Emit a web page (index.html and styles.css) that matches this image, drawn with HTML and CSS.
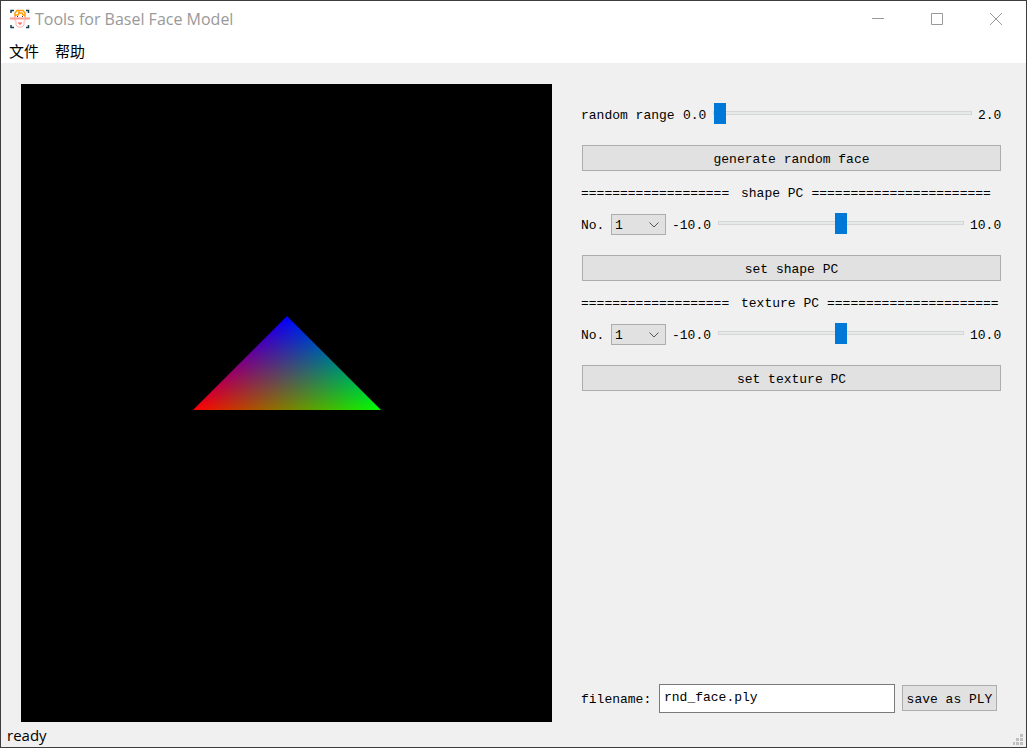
FILE: index.html
```html
<!DOCTYPE html>
<html lang="zh-CN">
<head>
<meta charset="utf-8">
<title>Tools for Basel Face Model</title>
<link rel="stylesheet" href="styles.css">
</head>
<body>
<div class="window">
  <header class="titlebar">
    <svg class="app-icon" width="20" height="20" viewBox="0 0 20 20" fill="none" aria-hidden="true">
      <path d="M1 4V1.500H4M16 1.500H18.500V4M1 16V18.500H4M16 18.500H18.500V16" stroke="#123f52" stroke-width="1.500"/>
      <path d="M5 8V4L7 1.500H13L15 4V8M5 6H8L9 4H12L13 6H15M9 2V4" stroke="#ff9d0a" stroke-width="1.500"/>
      <path d="M4.500 7V11L6 12V16L8 18H12L14 16V12L15.500 11V7" stroke="#ffb3ae"/>
      <path d="M0 9.500H20" stroke="#ff9c98" stroke-width="2"/>
      <path d="M7 7.500H8M12 7.500H13" stroke="#123f52"/>
      <path d="M8 14H12M9 15H11" stroke="#ff4545"/>
    </svg>
    <h1 class="title">Tools for Basel Face Model</h1>
    <div class="window-buttons">
      <button class="window-button" type="button" aria-label="Minimize"><svg width="12" height="12" viewBox="0 0 12 12"><path d="M0 5.500H12"/></svg></button>
      <button class="window-button" type="button" aria-label="Maximize"><svg width="12" height="12" viewBox="0 0 12 12"><path d="M.5.500H11.500V11.500H.5Z"/></svg></button>
      <button class="window-button" type="button" aria-label="Close"><svg width="12" height="12" viewBox="0 0 12 12"><path d="M0 0L12 12M12 0L0 12"/></svg></button>
    </div>
  </header>
  <nav class="menubar">
    <button class="menu" type="button">文件</button>
    <button class="menu" type="button">帮助</button>
  </nav>
  <main class="content">
    <div class="viewport">
      <svg class="scene" viewBox="0 0 188 94" role="img" aria-label="Shaded triangle">
        <defs>
          <linearGradient id="red" gradientUnits="userSpaceOnUse" x1="0" y1="94" x2="94" y2="0"><stop stop-color="#f00"/><stop offset="1" stop-color="#000"/></linearGradient>
          <linearGradient id="green" gradientUnits="userSpaceOnUse" x1="188" y1="94" x2="94" y2="0"><stop stop-color="#0f0"/><stop offset="1" stop-color="#000"/></linearGradient>
          <linearGradient id="blue" gradientUnits="userSpaceOnUse" x1="94" y1="0" x2="94" y2="94"><stop stop-color="#00f"/><stop offset="1" stop-color="#000"/></linearGradient>
        </defs>
        <path class="light" fill="url(#red)" d="M0 94H188L94 0Z"/>
        <path class="light" fill="url(#green)" d="M0 94H188L94 0Z"/>
        <path class="light" fill="url(#blue)" d="M0 94H188L94 0Z"/>
      </svg>
    </div>
    <form class="panel">
      <div class="row">
        <label class="range-label" for="range">random range</label>
        <span class="short-value">0.0</span>
        <input class="slider" id="range" type="range" min="0" max="2" step="0.1" value="0">
        <span class="short-value">2.0</span>
      </div>
      <button class="button" type="button">generate random face</button>
      <div class="separator"><span>===================</span><span>shape PC</span><span>=======================</span></div>
      <div class="row">
        <label class="number-label" for="shape-no">No.</label>
        <select class="select" id="shape-no"><option>1</option></select>
        <span class="low-value">-10.0</span>
        <input class="slider" type="range" min="-10" max="10" value="0" aria-label="Shape value">
        <span class="high-value">10.0</span>
      </div>
      <button class="button" type="button">set shape PC</button>
      <div class="separator"><span>===================</span><span>texture PC</span><span>======================</span></div>
      <div class="row">
        <label class="number-label" for="texture-no">No.</label>
        <select class="select" id="texture-no"><option>1</option></select>
        <span class="low-value">-10.0</span>
        <input class="slider" type="range" min="-10" max="10" value="0" aria-label="Texture value">
        <span class="high-value">10.0</span>
      </div>
      <button class="button" type="button">set texture PC</button>
      <div class="file-row">
        <label class="file-label" for="filename">filename:</label>
        <input class="textbox" id="filename" type="text" value="rnd_face.ply">
        <button class="button save" type="button">save as PLY</button>
      </div>
    </form>
  </main>
  <footer class="statusbar">
    <span>ready</span>
    <svg class="grip" width="10" height="11" viewBox="0 0 10 11" fill="#bfbfbf" aria-hidden="true"><path d="M7 0h3v3H7zM3 4h3v3H3zM7 4h3v3H7zM0 8h2v3H0zM3 8h3v3H3zM7 8h3v3H7z"/></svg>
  </footer>
</div>
</body>
</html>
```
FILE: styles.css
```css
* { box-sizing: border-box; }
body {
  margin: 0;
  background: #f0f0f0;
  color: #000;
  font-family: "Open Sans", "Noto Sans CJK SC", sans-serif;
  font-size: 15px;
}
button, input, select { margin: 0; font: inherit; color: inherit; }

.window {
  display: flex;
  flex-direction: column;
  min-height: 100vh;
  border: 1px solid #3e3c3e;
}
.titlebar {
  display: flex;
  align-items: center;
  height: 36px;
  padding: 0 1px 0 9px;
  background: #fff;
}
.title {
  flex: 1;
  margin: 0 0 0 5px;
  color: #999;
  font-size: 16px;
  font-weight: 400;
}
.window-buttons { display: flex; }
.window-button {
  display: grid;
  place-items: center;
  width: 59px;
  height: 36px;
  padding: 0;
  border: 0;
  background: none;
}
.window-button path { fill: none; stroke: #999; }
.menubar {
  display: flex;
  gap: 16px;
  height: 26px;
  padding-left: 8px;
  background: #fff;
}
.menu {
  padding: 0;
  border: 0;
  background: none;
  line-height: 28px;
}

.content {
  flex: 1;
  display: grid;
  grid-template-columns: minmax(0, 531fr) minmax(0, 421fr);
  gap: 29px;
  padding: 21px 24px 0 20px;
}
.viewport {
  display: grid;
  place-items: center;
  padding-bottom: 80px;
  background: #000;
}
.scene { width: 188px; isolation: isolate; }
.light { mix-blend-mode: screen; }

.panel {
  display: flex;
  flex-direction: column;
  padding: 19px 0 9px;
  font-family: "Liberation Mono", monospace;
  font-size: 13px;
}
.row {
  display: flex;
  align-items: center;
  height: 21px;
  margin-bottom: 21px;
  line-height: 21px;
  white-space: nowrap;
}
.row span, .row label { padding-top: 4px; }
.range-label { width: 102px; }
.number-label { width: 30px; }
.short-value { width: 24px; }
.low-value { width: 40px; margin-left: 6px; }
.high-value { width: 32px; }
.select {
  appearance: none;
  width: 55px;
  height: 21px;
  margin-top: 2px;
  padding: 0 3px;
  border: 1px solid #adadad;
  border-radius: 0;
  background: #e1e1e1 url("data:image/svg+xml,%3Csvg xmlns='http://www.w3.org/2000/svg' width='10' height='6' fill='none' stroke='%23555'%3E%3Cpath d='M.5.5L5 5L9.500.5'/%3E%3C/svg%3E") no-repeat right 6px center;
}
.slider {
  appearance: none;
  flex: 1;
  align-self: flex-start;
  min-width: 0;
  height: 20px;
  margin: 0 6px;
  background: none;
}
.slider::-webkit-slider-runnable-track {
  height: 4px;
  border: 1px solid #d6d6d6;
  background: #e7eaea;
}
.slider::-webkit-slider-thumb {
  appearance: none;
  width: 12px;
  height: 21px;
  margin-top: -9px;
  background: #0078d7;
}
.button {
  height: 26px;
  margin: 0 1px;
  padding: 2px 0 0;
  border: 1px solid #adadad;
  background: #e1e1e1;
}
.separator {
  display: grid;
  grid-template-columns: 152px auto minmax(0, 1fr);
  gap: 8px;
  height: 42px;
  line-height: 46px;
  white-space: nowrap;
}
.file-row {
  display: flex;
  align-items: center;
  margin-top: auto;
  padding-right: 5px;
}
.file-label { width: 78px; padding-top: 2px; }
.textbox {
  flex: 1;
  min-width: 0;
  height: 29px;
  padding: 0 4px 2px;
  border: 1px solid #7a7a7a;
  background: #fff;
}
.save {
  align-self: flex-start;
  width: 95px;
  margin: 1px 0 0 7px;
}

.statusbar {
  display: flex;
  align-items: center;
  justify-content: space-between;
  height: 25px;
  padding: 0 3px 0 6px;
}
.grip { align-self: flex-end; margin-bottom: 2px; }
```
